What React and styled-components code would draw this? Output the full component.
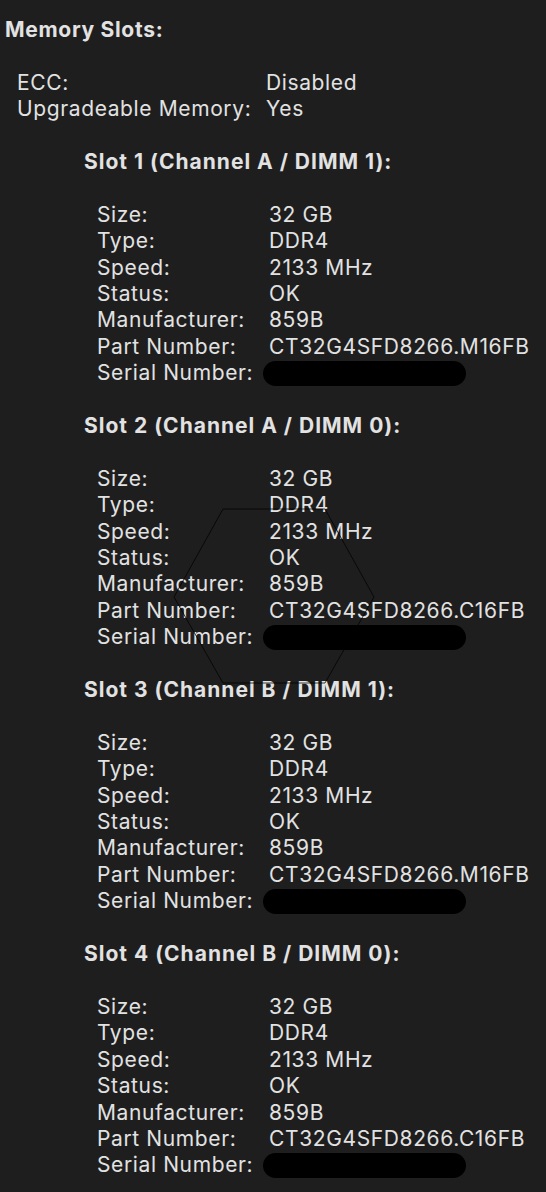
import React from 'react'
import styled, { createGlobalStyle } from 'styled-components'

const GlobalStyle = createGlobalStyle`
  html, body {
    margin: 0;
    background: #1e1e1e;
  }
`

const Page = styled.div`
  position: relative;
  width: 546px;
  min-height: 1192px;
  box-sizing: border-box;
  padding-top: 17px;
  background: #1e1e1e;
  color: #e2e2e2;
  font-family: Inter, "Noto Sans", "Liberation Sans", sans-serif;
  font-size: 21px;
  letter-spacing: 0.62px;
  line-height: 26.4px;
  overflow: hidden;
`

const Title = styled.div`
  font-weight: 700;
  letter-spacing: 0.7px;
  padding-left: 5px;
  margin-bottom: 26.4px;
`

const Table = styled.div`
  display: grid;
  grid-template-columns: ${p => p.labelWidth}px auto;
  padding-left: ${p => p.indent}px;
  margin-bottom: 26.4px;
`

const Label = styled.div`
  white-space: nowrap;
`

const Value = styled.div`
  white-space: nowrap;
`

const Redacted = styled.span`
  display: inline-block;
  width: 203px;
  height: 25px;
  margin-left: -6px;
  margin-top: 1px;
  border-radius: 13px;
  background: #000;
  vertical-align: top;
`

const SlotHeading = styled.div`
  font-weight: 700;
  letter-spacing: 1px;
  padding-left: 84px;
  margin-bottom: 26.4px;
`

const Hexagon = styled.svg`
  position: absolute;
  left: 172px;
  top: 508px;
  pointer-events: none;
`

const slots = [
  { name: 'Slot 1 (Channel A / DIMM 1):', part: 'CT32G4SFD8266.M16FB' },
  { name: 'Slot 2 (Channel A / DIMM 0):', part: 'CT32G4SFD8266.C16FB' },
  { name: 'Slot 3 (Channel B / DIMM 1):', part: 'CT32G4SFD8266.M16FB' },
  { name: 'Slot 4 (Channel B / DIMM 0):', part: 'CT32G4SFD8266.C16FB' },
]

const Slot = ({ slot }) => (
  <>
    <SlotHeading>{slot.name}</SlotHeading>
    <Table indent={97} labelWidth={172}>
      <Label>Size:</Label><Value>32 GB</Value>
      <Label>Type:</Label><Value>DDR4</Value>
      <Label>Speed:</Label><Value>2133 MHz</Value>
      <Label>Status:</Label><Value>OK</Value>
      <Label>Manufacturer:</Label><Value>859B</Value>
      <Label>Part Number:</Label><Value>{slot.part}</Value>
      <Label>Serial Number:</Label><Value><Redacted /></Value>
    </Table>
  </>
)

export default function App() {
  return (
    <Page>
      <GlobalStyle />
      <Title>Memory Slots:</Title>
      <Table indent={17} labelWidth={249}>
        <Label>ECC:</Label><Value>Disabled</Value>
        <Label>Upgradeable Memory:</Label><Value>Yes</Value>
      </Table>
      {slots.map(s => <Slot key={s.name} slot={s} />)}
      <Hexagon width="204" height="178" viewBox="0 0 204 178">
        <polygon
          points="51,1 153,1 202,89 153,175 51,175 2,89"
          fill="none"
          stroke="rgba(0,0,0,0.75)"
          strokeWidth="1"
        />
      </Hexagon>
    </Page>
  )
}
